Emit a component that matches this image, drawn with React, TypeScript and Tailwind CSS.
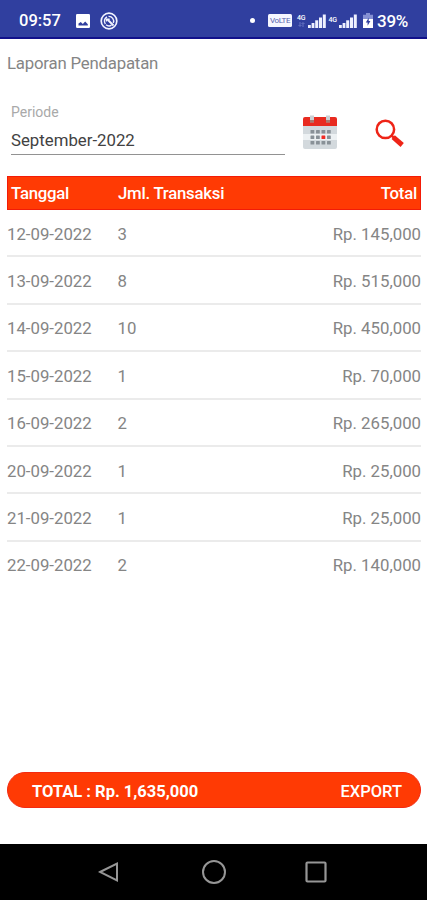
import React from "react";

const rows = [
  ["12-09-2022", "3", "Rp. 145,000"],
  ["13-09-2022", "8", "Rp. 515,000"],
  ["14-09-2022", "10", "Rp. 450,000"],
  ["15-09-2022", "1", "Rp. 70,000"],
  ["16-09-2022", "2", "Rp. 265,000"],
  ["20-09-2022", "1", "Rp. 25,000"],
  ["21-09-2022", "1", "Rp. 25,000"],
  ["22-09-2022", "2", "Rp. 140,000"],
];

function SignalBars() {
  return (
    <svg className="h-[14px] w-[18px] shrink-0" viewBox="0 0 18 14" fill="#eef0ff">
      <rect x="0" y="11" width="2.8" height="3" />
      <rect x="3.6" y="9" width="2.8" height="5" />
      <rect x="7.2" y="6.3" width="3" height="7.7" />
      <rect x="11" y="3.5" width="3" height="10.5" />
      <rect x="14.8" y="0.5" width="3" height="13.5" />
    </svg>
  );
}

function StatusBar() {
  return (
    <header className="flex h-[39px] items-center border-b-2 border-[#11118b] bg-[#303f9f] pt-[4px] text-white">
      <span className="ml-[19px] w-[57px] text-[16.5px] font-medium leading-5">09:57</span>
      <svg className="h-[14px] w-[14px]" viewBox="0 0 14 14">
        <rect width="14" height="14" rx="1.2" fill="#fff" />
        <path d="M2.5 11.5V9.6L4.8 8l2 2 2.4-2.6 2.6 2.8v1.3z" fill="#303f9f" />
      </svg>
      <svg className="ml-[10px] h-[18px] w-[18px]" viewBox="0 0 18 18" fill="none" stroke="#f2f4ff">
        <circle cx="9" cy="9" r="7.8" strokeWidth="1.7" />
        <path d="M5.4 12A4.8 4.8 0 0 1 7 4.8M8.5 4.4A4.8 4.8 0 0 1 13.3 11M11.5 13.2A4.8 4.8 0 0 1 6 12.7" strokeWidth="1.4" />
        <path d="M7.5 7.5l6 6" strokeWidth="2" />
        <path d="M6.5 9.5V7.2h3.2" strokeWidth="1.4" />
      </svg>
      <div className="ml-auto flex items-center pr-[19px]">
        <span className="mr-[13px] h-[5px] w-[5px] rounded-full bg-white" />
        <span className="mr-[4px] flex h-[13px] w-[24px] items-center justify-center rounded-[1.5px] bg-[#f5f6ff] text-[8px] leading-none tracking-[-0.4px] text-[#5964ad]">
          VoLTE
        </span>
        <span className="mr-[2px] flex w-[10px] flex-col items-center">
          <span className="text-[7px] font-medium leading-[8px] tracking-[-0.3px]">4G</span>
          <svg className="h-[5px] w-[7px]" viewBox="0 0 7 5" fill="none" stroke="#7480ca">
            <path d="M2 0v4M.5 3L2 4.5 3.5 3M5 5V1M3.5 2L5 .5 6.5 2" strokeWidth=".8" />
          </svg>
        </span>
        <SignalBars />
        <span className="mx-[2px] w-[9px] text-center text-[7px] font-medium leading-none tracking-[-0.3px]">4G</span>
        <SignalBars />
        <svg className="ml-[6px] mr-[4px] h-[15px] w-[10px]" viewBox="0 0 10 15">
          <path d="M3 0h4v1.7h3V15H0V1.7h3z" fill="#8590d3" />
          <path d="M0 6h10v9H0z" fill="#fff" />
          <path d="M5.7 4.8L2.8 9.4h1.8v3.4l2.8-4.7H5.7z" fill="#303f9f" />
        </svg>
        <span className="text-[17px] font-medium leading-5 tracking-[-0.3px]">39%</span>
      </div>
    </header>
  );
}

function CalendarIcon() {
  const columns = [8.5, 14, 19.5, 25];
  const lines = [15, 20.5, 26];
  return (
    <svg className="h-[36px] w-[36px]" viewBox="0 0 36 36">
      <path d="M1 10h34v22a2 2 0 0 1-2 2H3a2 2 0 0 1-2-2z" fill="#d3d9dd" />
      <path d="M1 19h34v6H1z" fill="#edf1f3" />
      <path d="M3 2h30a2 2 0 0 1 2 2v7H1V4a2 2 0 0 1 2-2z" fill="#e82b20" />
      <path d="M8 .5h4v6.8H8zM24 .5h4v6.8h-4z" fill="#cbd0d4" />
      <path d="M8 5h4v2.5H8zM24 5h4v2.5h-4z" fill="#a9796f" />
      {lines.map((y) =>
        columns.map((x) => (
          <rect
            key={`${x}-${y}`}
            x={x}
            y={y}
            width="3.8"
            height="3.6"
            rx=".5"
            fill={x === 19.5 && y === 20.5 ? "#f02c25" : "#899197"}
          />
        )),
      )}
    </svg>
  );
}

export default function App() {
  return (
    <div className="flex h-[900px] w-full flex-col overflow-hidden bg-white font-['Roboto','Noto_Sans',sans-serif] text-[#858585]">
      <StatusBar />
      <main className="flex flex-1 flex-col pl-[7px] pr-[6px]">
        <h1 className="mt-[13px] text-[16.8px] font-normal leading-[22px] tracking-[-0.2px]">Laporan Pendapatan</h1>
        <div className="mt-[28px] flex h-[74px] items-start pl-1">
          <div className="flex h-[53px] w-[274px] flex-col border-b border-[#929292]">
            <label className="text-[14px] leading-5 text-[#a9a9a9]">Periode</label>
            <span className="mt-[7px] text-[16.8px] leading-[22px] text-[#424242]">September-2022</span>
          </div>
          <button className="ml-[17px] mt-[13px]" aria-label="Kalender">
            <CalendarIcon />
          </button>
          <button className="ml-[37px] mt-[17px]" aria-label="Cari">
            <svg className="h-[28px] w-[29px]" viewBox="0 0 29 28" fill="none">
              <circle cx="10.4" cy="10.4" r="8.7" stroke="#ee2417" strokeWidth="2.5" />
              <path d="M16.5 16.4l3.2 3.2" stroke="#ee2417" strokeWidth="2.4" />
              <path d="M18.2 18.2l9 7.8" stroke="#ee2417" strokeWidth="5" />
            </svg>
          </button>
        </div>
        <div className="grid h-[34px] shrink-0 grid-cols-[107px_1fr_auto] items-center border border-[#f31b08] bg-[#ff3a04] px-[3px] text-[16.8px] font-medium leading-[22px] tracking-[-0.25px] text-white">
          <span>Tanggal</span>
          <span>Jml. Transaksi</span>
          <span>Total</span>
        </div>
        <div className="text-[16.8px]">
          {rows.map(([date, count, total]) => (
            <div
              key={date}
              className="grid h-[47.4px] grid-cols-[110.5px_1fr_auto] items-center border-b-2 border-[#ebebeb] pt-[2px] leading-[22px] last:border-transparent"
            >
              <span>{date}</span>
              <span>{count}</span>
              <span>{total}</span>
            </div>
          ))}
        </div>
        <div className="mb-[36px] mt-auto flex h-[36px] items-center justify-between rounded-full border border-[#f32a12] bg-[#ff3a04] pl-[24px] pr-[18px] pt-[3px] text-[16.5px] leading-[22px] text-white">
          <span className="font-bold">TOTAL : Rp. 1,635,000</span>
          <button className="font-medium">EXPORT</button>
        </div>
      </main>
      <nav className="flex h-[56px] shrink-0 items-center bg-black pl-[98px]">
        <svg className="h-[22px] w-[22px]" viewBox="0 0 22 22" fill="none" stroke="#969696" strokeWidth="2">
          <path d="M2 11L19 2.5v17z" />
        </svg>
        <svg className="ml-[81px] h-[26px] w-[26px]" viewBox="0 0 26 26" fill="none" stroke="#969696" strokeWidth="2">
          <circle cx="13" cy="13" r="11" />
        </svg>
        <svg className="ml-[77px] h-[24px] w-[24px]" viewBox="0 0 24 24" fill="none" stroke="#969696" strokeWidth="2.2">
          <rect x="2.5" y="2.5" width="19" height="19" rx="1" />
        </svg>
      </nav>
    </div>
  );
}
